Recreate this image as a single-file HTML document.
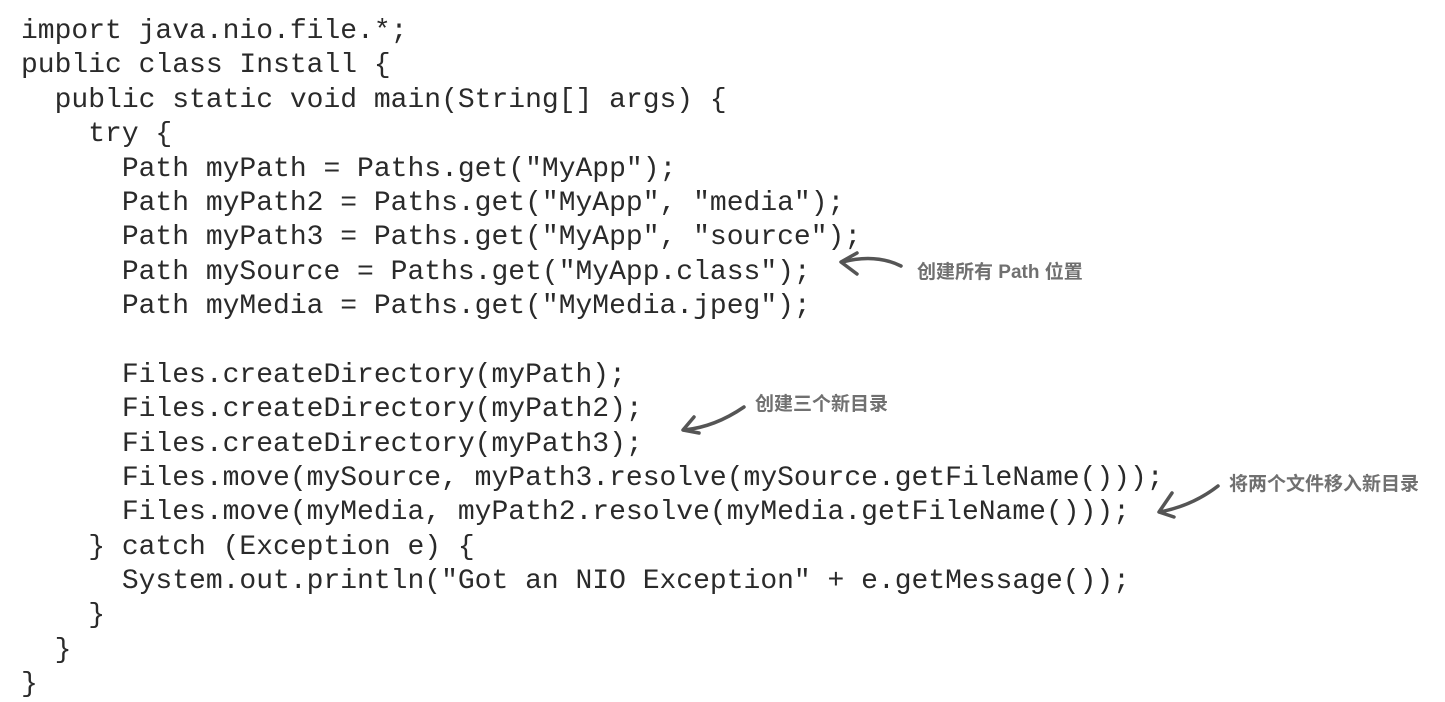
<!DOCTYPE html>
<html><head><meta charset="utf-8"><style>
html,body{margin:0;padding:0;background:#fff;width:1445px;height:702px;overflow:hidden;position:relative}
pre{position:absolute;left:21px;top:15px;margin:0;font-family:"Liberation Mono",monospace;font-size:28px;line-height:34.37px;color:#2a2a2a}
.a{position:absolute;font-family:"Liberation Sans","Noto Sans CJK SC",sans-serif;font-weight:bold;font-size:19px;color:#707070;white-space:nowrap}
svg{position:absolute;left:0;top:0}
</style></head><body>
<pre>import java.nio.file.*;
public class Install {
  public static void main(String[] args) {
    try {
      Path myPath = Paths.get("MyApp");
      Path myPath2 = Paths.get("MyApp", "media");
      Path myPath3 = Paths.get("MyApp", "source");
      Path mySource = Paths.get("MyApp.class");
      Path myMedia = Paths.get("MyMedia.jpeg");

      Files.createDirectory(myPath);
      Files.createDirectory(myPath2);
      Files.createDirectory(myPath3);
      Files.move(mySource, myPath3.resolve(mySource.getFileName()));
      Files.move(myMedia, myPath2.resolve(myMedia.getFileName()));
    } catch (Exception e) {
      System.out.println("Got an NIO Exception" + e.getMessage());
    }
  }
}</pre>
<div class="a" style="left:917px;top:257px">创建所有 Path 位置</div>
<div class="a" style="left:755px;top:389px">创建三个新目录</div>
<div class="a" style="left:1229px;top:469px">将两个文件移入新目录</div>
<svg width="1445" height="702" fill="none" stroke="#555" stroke-width="3.5" stroke-linecap="round" stroke-linejoin="round">
<path d="M901 266 C885 258 865 256 842 262"/><path d="M857 253 L841 262 L857 274"/>
<path d="M744 407 C725 420 705 428 684 430"/><path d="M694 417 L683 430 L699 433"/>
<path d="M1218 486 C1200 500 1180 508 1160 512"/><path d="M1172 493 L1159 512 L1174 517"/>
</svg>
</body></html>
